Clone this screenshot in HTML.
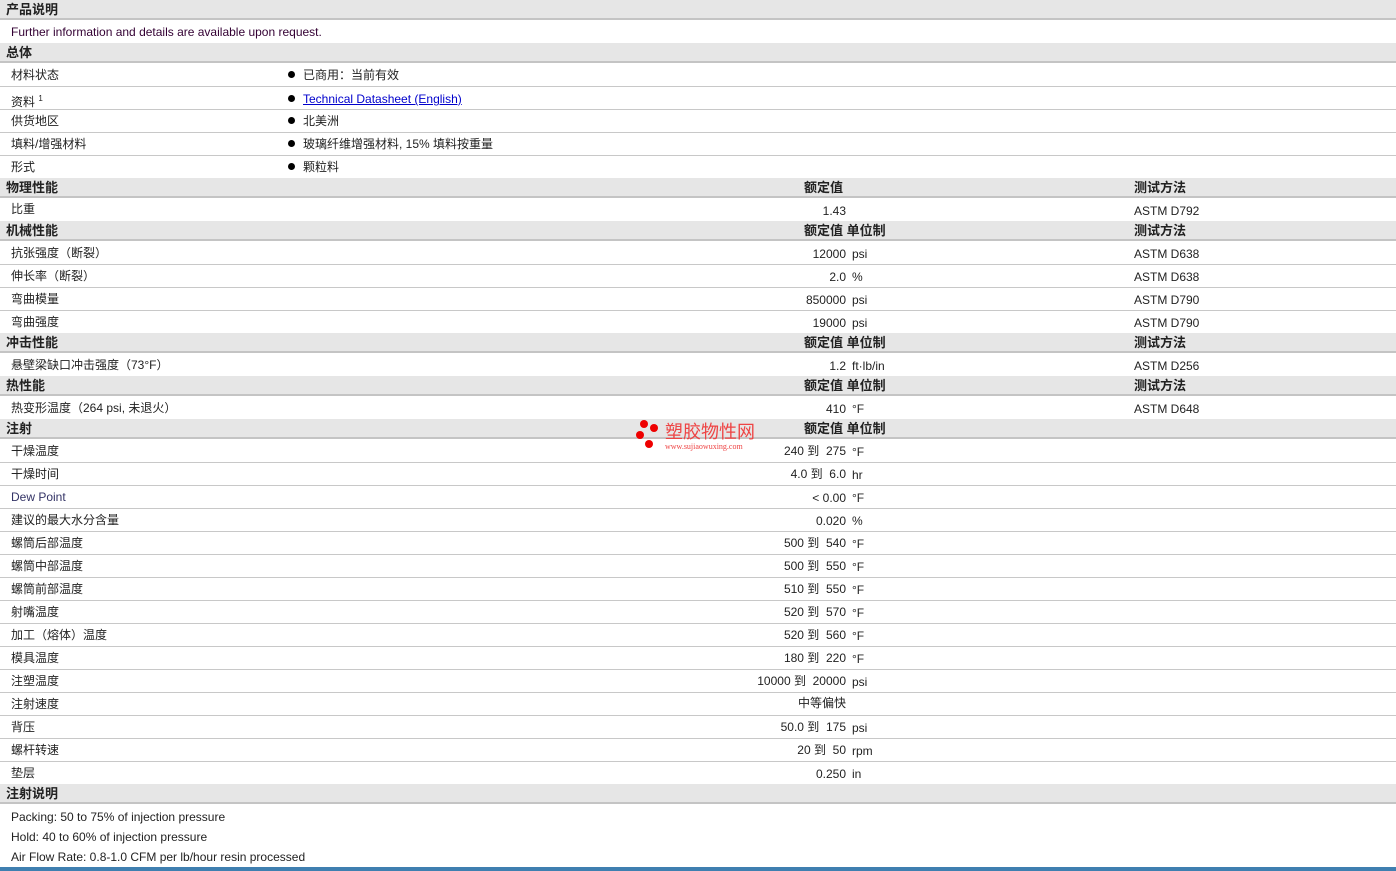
<!DOCTYPE html>
<html><head><meta charset="utf-8"><style>
body{margin:0;width:1396px;height:871px;overflow:hidden;background:#fff;font-family:"Liberation Sans","Noto Sans CJK SC",sans-serif;font-size:12px;color:#222;position:relative}
.r{position:absolute;left:0;width:1396px;border-bottom:1px solid #c8c8c8;box-sizing:border-box}
.h{background:#e6e6e6;border-bottom:2px solid #c4c4c4;font-weight:bold;font-size:13px;height:20px}
.h span,.r span{position:absolute;white-space:nowrap;line-height:14px}
.h span{top:3px!important}
.d{height:23px}
.l{left:11px}
.hl{left:6px;top:2px}
.v{right:550px;text-align:right}
.u{left:852px}
.t{left:1134px}
.b{left:288px}
.b:before{content:"";display:inline-block;width:7px;height:7px;border-radius:50%;background:#000;margin-right:8px;vertical-align:1px}
a{color:#00c;text-decoration:underline}
</style></head><body>
<div class="r h" style="top:0"><span class="hl">产品说明</span></div>
<div class="r" style="top:20px;height:23px;border:none"><span class="l" style="top:5px;color:#303">Further information and details are available upon request.</span></div>
<div class="r h" style="top:43px"><span class="hl">总体</span></div>
<div class="r d" style="top:64px"><span class="l" style="top:4px">材料状态</span><span class="b" style="top:4px">已商用：当前有效</span></div>
<div class="r d" style="top:87px"><span class="l" style="top:5px">资料 <sup style="font-size:8px">1</sup></span><span class="b" style="top:5px"><a>Technical Datasheet (English)</a></span></div>
<div class="r d" style="top:110px"><span class="l" style="top:4px">供货地区</span><span class="b" style="top:4px">北美洲</span></div>
<div class="r d" style="top:133px"><span class="l" style="top:4px">填料/增强材料</span><span class="b" style="top:4px">玻璃纤维增强材料, 15% 填料按重量</span></div>
<div class="r d" style="top:156px;border:none"><span class="l" style="top:4px">形式</span><span class="b" style="top:4px">颗粒料</span></div>
<div class="r h" style="top:178px"><span class="hl">物理性能</span><span style="left:804px">额定值</span><span style="left:1134px">测试方法</span></div>
<div class="r d" style="top:198px;border:none"><span class="l" style="top:4px">比重</span><span class="v" style="top:6px">1.43</span><span class="t" style="top:6px">ASTM D792</span></div>
<div class="r h" style="top:221px"><span class="hl">机械性能</span><span style="left:804px">额定值 单位制</span><span style="left:1134px">测试方法</span></div>
<div class="r d" style="top:242px"><span class="l" style="top:4px">抗张强度（断裂）</span><span class="v" style="top:5px">12000</span><span class="u" style="top:5px">psi</span><span class="t" style="top:5px">ASTM D638</span></div>
<div class="r d" style="top:265px"><span class="l" style="top:4px">伸长率（断裂）</span><span class="v" style="top:5px">2.0</span><span class="u" style="top:5px">%</span><span class="t" style="top:5px">ASTM D638</span></div>
<div class="r d" style="top:288px"><span class="l" style="top:4px">弯曲模量</span><span class="v" style="top:5px">850000</span><span class="u" style="top:5px">psi</span><span class="t" style="top:5px">ASTM D790</span></div>
<div class="r d" style="top:311px;border:none"><span class="l" style="top:4px">弯曲强度</span><span class="v" style="top:5px">19000</span><span class="u" style="top:5px">psi</span><span class="t" style="top:5px">ASTM D790</span></div>
<div class="r h" style="top:333px"><span class="hl">冲击性能</span><span style="left:804px">额定值 单位制</span><span style="left:1134px">测试方法</span></div>
<div class="r d" style="top:354px;border:none"><span class="l" style="top:4px">悬壁梁缺口冲击强度（73°F）</span><span class="v" style="top:5px">1.2</span><span class="u" style="top:5px">ft·lb/in</span><span class="t" style="top:5px">ASTM D256</span></div>
<div class="r h" style="top:376px"><span class="hl">热性能</span><span style="left:804px">额定值 单位制</span><span style="left:1134px">测试方法</span></div>
<div class="r d" style="top:397px;border:none"><span class="l" style="top:4px">热变形温度（264 psi, 未退火）</span><span class="v" style="top:5px">410</span><span class="u" style="top:5px">°F</span><span class="t" style="top:5px">ASTM D648</span></div>
<div class="r h" style="top:419px"><span class="hl">注射</span><span style="left:804px">额定值 单位制</span></div>
<div class="r d" style="top:440px"><span class="l" style="top:4px">干燥温度</span><span class="v" style="top:4px">240 到 &nbsp;275</span><span class="u" style="top:5px">°F</span></div>
<div class="r d" style="top:463px"><span class="l" style="top:4px">干燥时间</span><span class="v" style="top:4px">4.0 到 &nbsp;6.0</span><span class="u" style="top:5px">hr</span></div>
<div class="r d" style="top:486px"><span class="l" style="top:4px;color:#336">Dew Point</span><span class="v" style="top:5px">&lt; 0.00</span><span class="u" style="top:5px">°F</span></div>
<div class="r d" style="top:509px"><span class="l" style="top:4px">建议的最大水分含量</span><span class="v" style="top:5px">0.020</span><span class="u" style="top:5px">%</span></div>
<div class="r d" style="top:532px"><span class="l" style="top:4px">螺筒后部温度</span><span class="v" style="top:4px">500 到 &nbsp;540</span><span class="u" style="top:5px">°F</span></div>
<div class="r d" style="top:555px"><span class="l" style="top:4px">螺筒中部温度</span><span class="v" style="top:4px">500 到 &nbsp;550</span><span class="u" style="top:5px">°F</span></div>
<div class="r d" style="top:578px"><span class="l" style="top:4px">螺筒前部温度</span><span class="v" style="top:4px">510 到 &nbsp;550</span><span class="u" style="top:5px">°F</span></div>
<div class="r d" style="top:601px"><span class="l" style="top:4px">射嘴温度</span><span class="v" style="top:4px">520 到 &nbsp;570</span><span class="u" style="top:5px">°F</span></div>
<div class="r d" style="top:624px"><span class="l" style="top:4px">加工（熔体）温度</span><span class="v" style="top:4px">520 到 &nbsp;560</span><span class="u" style="top:5px">°F</span></div>
<div class="r d" style="top:647px"><span class="l" style="top:4px">模具温度</span><span class="v" style="top:4px">180 到 &nbsp;220</span><span class="u" style="top:5px">°F</span></div>
<div class="r d" style="top:670px"><span class="l" style="top:4px">注塑温度</span><span class="v" style="top:4px">10000 到 &nbsp;20000</span><span class="u" style="top:5px">psi</span></div>
<div class="r d" style="top:693px"><span class="l" style="top:4px">注射速度</span><span class="v" style="top:3px">中等偏快</span></div>
<div class="r d" style="top:716px"><span class="l" style="top:4px">背压</span><span class="v" style="top:4px">50.0 到 &nbsp;175</span><span class="u" style="top:5px">psi</span></div>
<div class="r d" style="top:739px"><span class="l" style="top:4px">螺杆转速</span><span class="v" style="top:4px">20 到 &nbsp;50</span><span class="u" style="top:5px">rpm</span></div>
<div class="r d" style="top:762px;border:none"><span class="l" style="top:4px">垫层</span><span class="v" style="top:5px">0.250</span><span class="u" style="top:5px">in</span></div>
<div class="r h" style="top:784px"><span class="hl">注射说明</span></div>
<div style="position:absolute;left:11px;top:807px;line-height:20px;color:#222">Packing: 50 to 75% of injection pressure<br>Hold: 40 to 60% of injection pressure<br>Air Flow Rate: 0.8-1.0 CFM per lb/hour resin processed</div>
<div style="position:absolute;left:0;top:867px;width:1396px;height:4px;background:#3f7fb0"></div>
<div style="position:absolute;left:636px;top:419px;width:30px;height:32px">
<div style="position:absolute;left:4px;top:1px;width:8px;height:8px;border-radius:50%;background:#e00"></div>
<div style="position:absolute;left:14px;top:5px;width:8px;height:8px;border-radius:50%;background:#e00"></div>
<div style="position:absolute;left:0;top:12px;width:8px;height:8px;border-radius:50%;background:#e00"></div>
<div style="position:absolute;left:9px;top:21px;width:8px;height:8px;border-radius:50%;background:#e00"></div>
</div>
<div style="position:absolute;left:665px;top:421px;color:#e44;font-size:18px;font-family:'Noto Sans CJK SC',sans-serif;line-height:20px">塑胶物性网</div>
<div style="position:absolute;left:665px;top:442px;color:#e44;font-size:8px;font-family:'Liberation Serif',serif">www.sujiaowuxing.com</div>
</body></html>
